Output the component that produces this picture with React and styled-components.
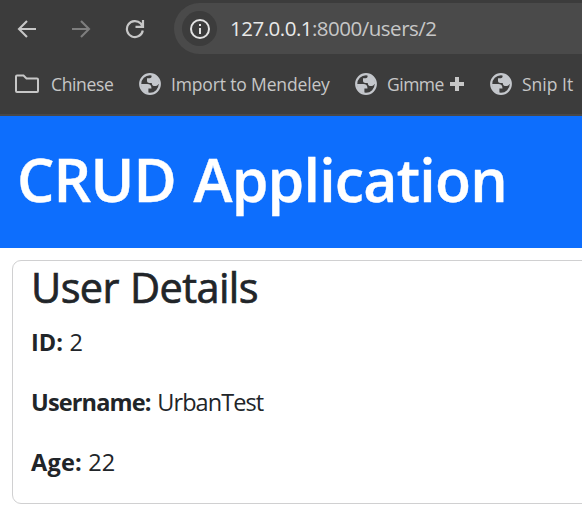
import React from "react";
import styled, { createGlobalStyle } from "styled-components";

const Global = createGlobalStyle`
  *, *::before, *::after { box-sizing: border-box; }
  html, body { margin: 0; padding: 0; overflow: hidden; }
  body { background: #fff; color: #212529; font-family: "Segoe UI", "Open Sans", sans-serif; }
`;

const Browser = styled.div`
  width: 582px;
  height: 514px;
  overflow: hidden;
`;

const Chrome = styled.header`
  height: 116px;
  background: #3c3c3c;
  border-bottom: 2px solid #484848;
`;

const Toolbar = styled.div`
  display: flex;
  align-items: center;
  height: 57px;
  padding-left: 17px;
`;

const NavButton = styled.button`
  display: flex;
  width: 20px;
  height: 20px;
  margin-right: 34px;
  padding: 0;
  border: 0;
  background: none;
  color: ${(p) => (p.$muted ? "#7e7e7e" : "#c7c7c7")};
`;

const AddressBar = styled.div`
  display: flex;
  flex: 1;
  align-items: center;
  height: 51px;
  margin-left: -5px;
  padding-left: 8px;
  border-radius: 26px 0 0 26px;
  background: #4a4a4a;
`;

const SiteInfo = styled.span`
  display: flex;
  align-items: center;
  justify-content: center;
  width: 35px;
  height: 35px;
  margin-right: 13px;
  border-radius: 50%;
  background: #3c3c3c;
  color: #e3e3e3;
`;

const Url = styled.span`
  padding-bottom: 2px;
  color: #c7c7c7;
  font-size: 20.5px;
  line-height: 30px;
  letter-spacing: -0.5px;
  white-space: nowrap;
`;

const Host = styled.span`
  color: #e9e9e9;
`;

const Bookmarks = styled.nav`
  display: flex;
  align-items: center;
  height: 54px;
  padding-left: 15px;
`;

const Bookmark = styled.a`
  display: flex;
  flex: none;
  align-items: center;
  width: ${(p) => p.$width}px;
  gap: ${(p) => p.$gap || 10}px;
  color: #c7c7c7;
  font-size: 17.5px;
  line-height: 24px;
  letter-spacing: ${(p) => p.$track || 0}px;
  white-space: nowrap;
`;

const WithPlus = styled.span`
  display: flex;
  align-items: center;
  gap: 6px;
`;

const Banner = styled.div`
  display: flex;
  align-items: center;
  height: 132px;
  padding: 0 0 6px 17px;
  background: #0d6efd;
`;

const Title = styled.h1`
  margin: 0;
  color: #fff;
  font-size: 59px;
  font-weight: 600;
  line-height: 72px;
  letter-spacing: -0.8px;
  word-spacing: 3px;
  white-space: nowrap;
  -webkit-text-stroke: 0.4px currentColor;
`;

const Card = styled.section`
  width: 600px;
  height: 244px;
  margin: 12px 0 0 12px;
  padding-left: 18px;
  border: 1px solid #d0d0d1;
  border-radius: 9px;
`;

const Heading = styled.h2`
  margin: 0 0 12px;
  padding-top: 1px;
  font-size: 41.5px;
  font-weight: 500;
  line-height: 50px;
  letter-spacing: -0.6px;
  word-spacing: 1px;
  -webkit-text-stroke: 0.7px currentColor;
`;

const Field = styled.p`
  margin: 0 0 24px;
  font-size: 23.5px;
  line-height: 36px;
  white-space: nowrap;
  letter-spacing: ${(p) => p.$track || 0}px;
  word-spacing: ${(p) => p.$space || 0}px;
`;

const Label = styled.strong`
  font-weight: 700;
  letter-spacing: ${(p) => p.$track || 0}px;
`;

const ArrowIcon = ({ flip }) => (
  <svg width="20" height="20" viewBox="0 0 20 20" fill="none" stroke="currentColor" strokeWidth="2.1">
    <path d={flip ? "M1 10H18M10 2l8 8-8 8" : "M19 10H2M10 2L2 10l8 8"} />
  </svg>
);

const ReloadIcon = () => (
  <svg width="20" height="20" viewBox="0 0 20 20" fill="none" stroke="currentColor" strokeWidth="2.2">
    <path d="M17.8 11.5A8 8 0 1 1 15.8 4.6L17.5 7M18 1v6.8h-7.5" />
  </svg>
);

const InfoIcon = () => (
  <svg width="20" height="20" viewBox="0 0 20 20" fill="none" stroke="currentColor" strokeWidth="2">
    <circle cx="10" cy="10" r="9" />
    <path d="M10 9v6M10 5v2" />
  </svg>
);

const FolderIcon = () => (
  <svg width="24" height="20" viewBox="0 0 24 20" fill="none" stroke="currentColor" strokeWidth="2">
    <path d="M1 2.5Q1 1.5 2 1.5h6.5l3 3H22q1 0 1 1V17q0 1-1 1H2q-1 0-1-1Z" />
  </svg>
);

const GlobeIcon = () => (
  <svg width="22" height="22" viewBox="0 0 22 22">
    <circle cx="11" cy="11" r="9.8" fill="#3c3c3c" stroke="#c4c7cc" strokeWidth="2.2" />
    <g fill="#c4c7cc">
      <path d="M2 11h6.2c2.9 0 4.3 1.5 4.3 4.4H9.4v4.8C5 19.6 2 16 2 11Z" />
      <path d="M12.6 1.5v1.8c0 1.3-.8 2-2 2H8v2.4c0 1.5 1 2.2 2.5 2.2h2.2c.3 2.2 1.3 3.2 3.3 3.2 1.7 0 2.7-.6 3.4-2h1C20 5.500 17 2.500 12.600 1.500Z" />
    </g>
  </svg>
);

const PlusIcon = () => (
  <svg width="14" height="14" viewBox="0 0 14 14" fill="currentColor">
    <path d="M5 0h4v5h5v4H9v5H5V9H0V5h5Z" />
  </svg>
);

export default function App() {
  return (
    <>
      <Global />
      <Browser>
        <Chrome>
          <Toolbar>
            <NavButton aria-label="Back"><ArrowIcon /></NavButton>
            <NavButton aria-label="Forward" $muted><ArrowIcon flip /></NavButton>
            <NavButton aria-label="Reload"><ReloadIcon /></NavButton>
            <AddressBar>
              <SiteInfo><InfoIcon /></SiteInfo>
              <Url><Host>127.0.0.1</Host>:8000/users/2</Url>
            </AddressBar>
          </Toolbar>
          <Bookmarks>
            <Bookmark $width={124} $gap={12} $track={-0.35}><FolderIcon />Chinese</Bookmark>
            <Bookmark $width={216} $track={-0.15}><GlobeIcon />Import to Mendeley</Bookmark>
            <Bookmark $width={135} $track={-0.5}><GlobeIcon /><WithPlus>Gimme <PlusIcon /></WithPlus></Bookmark>
            <Bookmark $width={90}><GlobeIcon />Snip It</Bookmark>
          </Bookmarks>
        </Chrome>
        <Banner><Title>CRUD Application</Title></Banner>
        <Card>
          <Heading>User Details</Heading>
          <Field $space={0.5}><Label>ID:</Label> 2</Field>
          <Field $track={-0.95} $space={1.5}><Label $track={-0.85}>Username:</Label> UrbanTest</Field>
          <Field $track={0.2}><Label $track={0.2}>Age:</Label> 22</Field>
        </Card>
      </Browser>
    </>
  );
}
